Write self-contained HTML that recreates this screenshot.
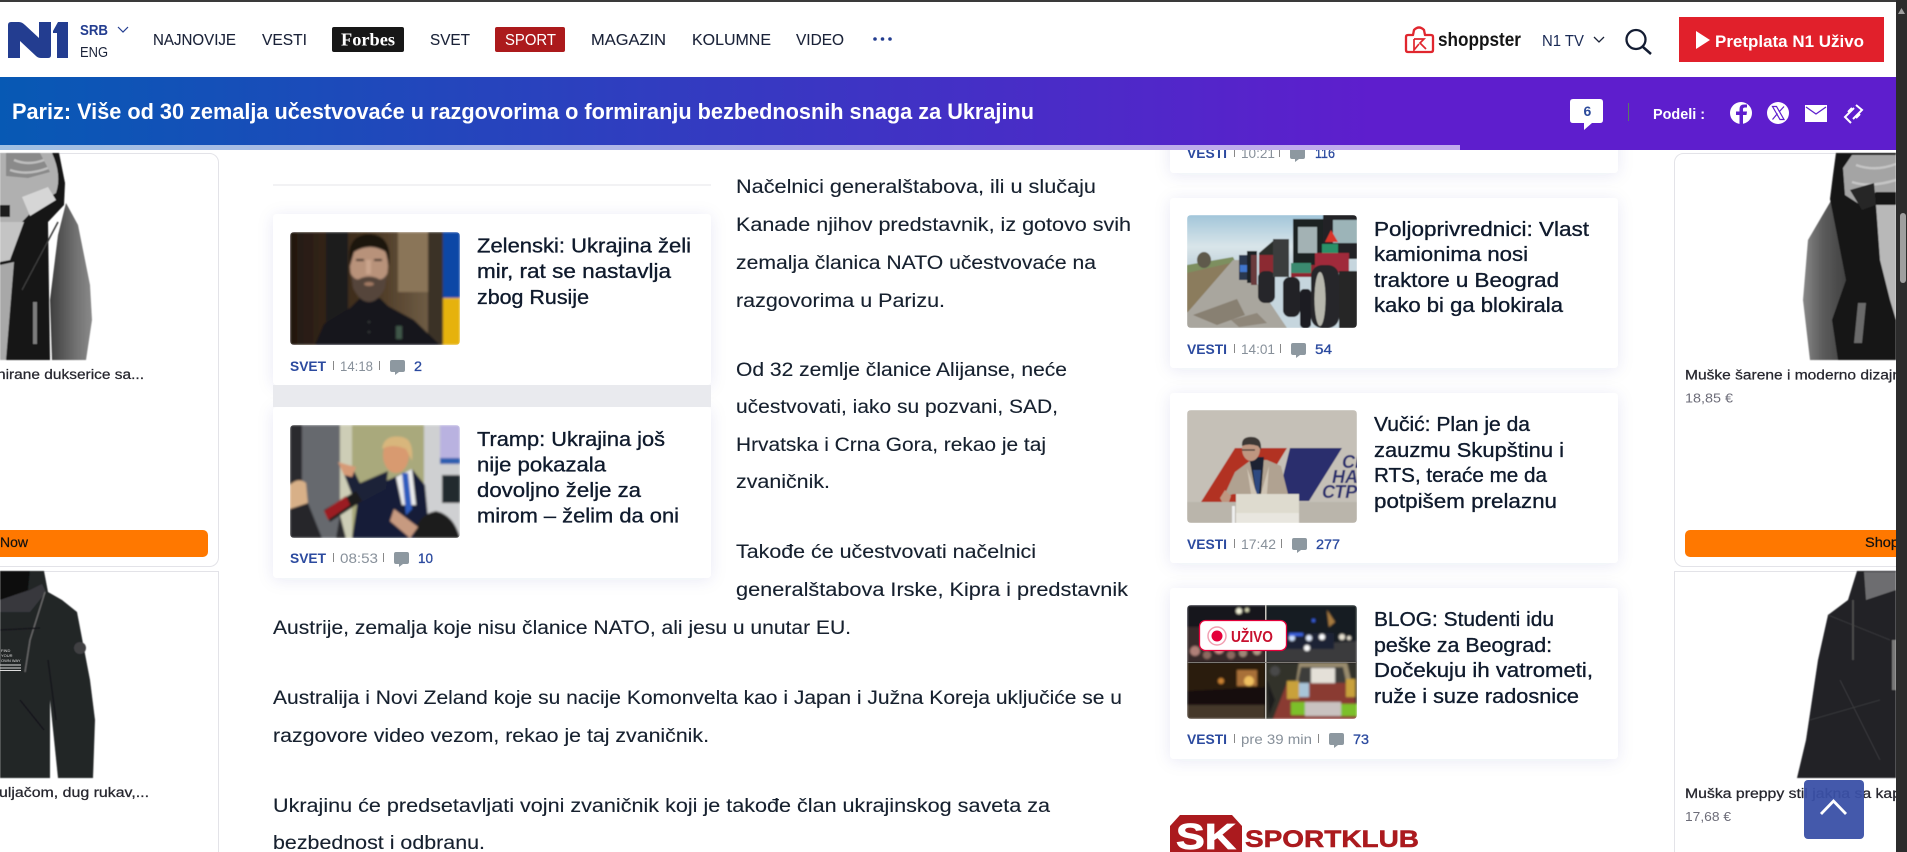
<!DOCTYPE html>
<html lang="sr"><head><meta charset="utf-8"><title>N1</title>
<style>
html,body{margin:0;padding:0;width:1907px;height:852px;overflow:hidden;background:#fff}
svg{display:block;position:absolute;left:0;top:0}
text{font-family:"Liberation Sans",sans-serif;white-space:pre}
.nav{font-size:15.5px;fill:#1a2238;stroke:#1a2238;stroke-width:.1px}
.ttl{font-size:20.5px;fill:#0f1a2c;stroke:#0f1a2c;stroke-width:.35px}
.art{font-size:19px;fill:#16202e;stroke:#16202e;stroke-width:.12px}
.cat{font-size:14px;font-weight:bold;fill:#2b4a9f}
.tm{font-size:14px;fill:#87909a}
.cn{font-size:14px;fill:#2b4a9f;stroke:#2b4a9f;stroke-width:.3px}
.ad{font-size:13.5px;fill:#26262e;stroke:#26262e;stroke-width:.25px}
.pr{font-size:13px;fill:#6c6c78}
</style></head><body>
<svg width="1907" height="852" viewBox="0 0 1907 852" xmlns="http://www.w3.org/2000/svg">
<defs>
<linearGradient id="bar" x1="0" x2="1" y1="0" y2="0"><stop offset="0" stop-color="#0759b4"/><stop offset=".72" stop-color="#5e1ecd"/><stop offset="1" stop-color="#5e1ecd"/></linearGradient>
<clipPath id="ph"><rect width="170" height="113" rx="4"/></clipPath>
<clipPath id="ph2"><rect width="170" height="114" rx="4"/></clipPath>
<filter id="sh" x="-10%" y="-20%" width="120%" height="140%"><feDropShadow dx="0" dy="2" stdDeviation="8" flood-color="#28408c" flood-opacity=".09"/></filter>
<filter id="bl" x="-5%" y="-5%" width="110%" height="110%"><feGaussianBlur stdDeviation="1"/></filter>
<filter id="bl2" x="-5%" y="-5%" width="110%" height="110%"><feGaussianBlur stdDeviation=".6"/></filter>
<linearGradient id="sky" x1="0" x2="0" y1="0" y2="1"><stop offset="0" stop-color="#a2c6da"/><stop offset=".28" stop-color="#d9e5e9"/><stop offset=".42" stop-color="#c6d6de"/></linearGradient>
<linearGradient id="zb" x1="0" x2="1" y1="0" y2="0"><stop offset="0" stop-color="#221710"/><stop offset=".45" stop-color="#46331f"/><stop offset=".8" stop-color="#6d5b44"/><stop offset="1" stop-color="#4d4030"/></linearGradient>
<linearGradient id="slv" x1="0" x2="1" y1="0" y2="0"><stop offset="0" stop-color="#3e3e3e"/><stop offset=".6" stop-color="#707070"/><stop offset="1" stop-color="#8a8a8a"/></linearGradient>
<linearGradient id="slv2" x1="0" x2="1" y1="0" y2="0"><stop offset="0" stop-color="#888"/><stop offset=".4" stop-color="#5c5c5c"/><stop offset="1" stop-color="#3a3a3a"/></linearGradient>
<g id="bub"><path d="M2 0h11a2 2 0 0 1 2 2v8a2 2 0 0 1-2 2H9l-4 3v-3H2a2 2 0 0 1-2-2V2a2 2 0 0 1 2-2z" fill="#8d98a0"/></g>
</defs>

<!-- LEFT ADS -->
<g>
<rect x="-10" y="153.500" width="228.500" height="413" rx="9" fill="#fff" stroke="#e3e3e8"/>
<rect x="-10" y="571.500" width="228.500" height="300" fill="#fff" stroke="#e3e3e8"/>
<g filter="url(#bl2)">
<path d="M66 203L78 225L90 285L92 320L86 360H52L50 300L58 235Z" fill="url(#slv)"/>
<path d="M0 153H59L65 183L64 205L48 222L50 360H0Z" fill="#141414"/>
<path d="M0 153H52Q62 175 56 193L40 203L22 222H0Z" fill="#b0b0b0"/>
<path d="M6 153H40L50 172L28 178L6 176Z" fill="#8a8a8a"/>
<path d="M14 160Q28 166 44 160M10 170Q28 176 48 168" stroke="#bdbdbd" stroke-width="2.500" fill="none"/>
<path d="M22 197L48 187L56 200L30 216Z" fill="#d6d6d6"/>
<path d="M0 205h10v12H0z" fill="#1a1a1a"/>
<path d="M0 222H24L10 260L0 262Z" fill="#c4c4c4"/>
<path d="M0 265L14 262L6 360H0Z" fill="#a8a8a8"/>
<path d="M33 302h4v42h-4z" fill="#7c7c7c"/>
<path d="M58 222L22 290" stroke="#3a3a3a" stroke-width="1.500"/>
</g>
<text class="ad" x="-3" y="379" textLength="147" lengthAdjust="spacingAndGlyphs">nirane dukserice sa...</text>
<rect x="-10" y="530" width="218" height="27" rx="5" fill="#ff7800"/>
<text x="0" y="547" font-size="14" fill="#111" stroke="#111" stroke-width=".2" textLength="28" lengthAdjust="spacingAndGlyphs">Now</text>
<g filter="url(#bl2)">
<path d="M0 571H44L48 592L62 600L77 612L90 680L95 720L93 778H58L50 700L50 778H0Z" fill="#242528"/>
<path d="M0 571H30L28 590L0 600Z" fill="#101010"/>
<path d="M0 600L30 590L42 584L46 592L30 612L0 612Z" fill="#38393c"/>
<path d="M45 592L30 640L25 672" stroke="#666" stroke-width="1.500" fill="none"/>
<path d="M0 630L40 628M48 660L56 720M20 700L44 730" stroke="#18181a" stroke-width="1.500" fill="none"/>
<circle cx="80" cy="648" r="6" fill="#3f3f43"/>
</g>
<text x="1" y="652" font-size="4" fill="#ddd">FIND</text>
<text x="1" y="657" font-size="4" fill="#ddd">YOUR</text>
<text x="1" y="662" font-size="4" fill="#ddd">OWN WAY</text>
<path d="M0 664.500h21v1H0zM0 667.500h21v1H0zM0 670h21v1H0z" fill="#ddd"/>
<text class="ad" x="-1" y="797" textLength="150" lengthAdjust="spacingAndGlyphs">uljačom, dug rukav,...</text>
</g>

<!-- ARTICLE -->
<rect x="273" y="184.500" width="438" height="1" fill="#e5e5e8"/>
<rect x="273" y="214" width="438" height="171" rx="4" fill="#fff" filter="url(#sh)"/>
<rect x="273" y="407" width="438" height="171" rx="4" fill="#fff" filter="url(#sh)"/>
<rect x="273" y="385" width="438" height="22" fill="#e9eaee"/>

<g transform="translate(290 232)" clip-path="url(#ph)"><g filter="url(#bl)">
<rect width="170" height="113" fill="url(#zb)"/>
<rect x="36" width="22" height="113" fill="#1d1b1f"/>
<rect x="108" width="30" height="60" fill="#8a7558"/>
<rect x="138" width="16" height="113" fill="#3a3028"/>
<rect x="153" width="17" height="66" fill="#0d47a6"/>
<rect x="153" y="66" width="17" height="47" fill="#e6b208"/>
<path d="M25 113L34 92L60 76L70 66H90L98 74L124 88L150 113Z" fill="#13171a"/>
<ellipse cx="79" cy="34" rx="19" ry="28" fill="#b8927a"/>
<path d="M60 34Q55 3 79 2Q103 3 99 34L96 20Q80 10 64 20Z" fill="#1a1411"/>
<path d="M61 42Q66 50 71 46Q79 43 87 46Q92 50 97 42L95 56Q88 70 79 70Q70 70 63 56Z" fill="#54443a"/>
<ellipse cx="79" cy="52" rx="5" ry="2" fill="#a27a64"/>
<path d="M66 28h8M84 28h8" stroke="#2a1c14" stroke-width="2"/>
<rect x="76" y="28" width="5" height="14" fill="#c9a48c"/>
<path d="M106 94h6v13h-6z" fill="#40574a"/>
<circle cx="79" cy="90" r="1" fill="#444"/><circle cx="79" cy="100" r="1" fill="#444"/>
</g></g>

<g transform="translate(290 425)" clip-path="url(#ph)"><g filter="url(#bl)">
<rect width="170" height="113" fill="#2a2b2e"/>
<rect x="12" width="38" height="113" fill="#66696e"/>
<rect x="50" width="12" height="113" fill="#cdcdb6"/>
<rect x="62" width="72" height="113" fill="#a9a97c"/>
<rect x="134" width="36" height="113" fill="#cfd0d2"/>
<rect x="150" width="20" height="33" fill="#b9b2e0"/><rect x="150" y="33" width="20" height="6" fill="#2f5fb0"/>
<rect x="152" y="50" width="18" height="28" fill="#23292f"/>
<path d="M62 113L68 74L96 56L122 44L135 60L140 113Z" fill="#191f38"/>
<path d="M52 44L62 42L70 58L98 46L96 64L66 80Z" fill="#1b2138"/>
<path d="M48 37L58 40L66 42L62 52L54 50Z" fill="#d69a76"/>
<path d="M106 52L122 44L126 80L112 80Z" fill="#ececec"/>
<path d="M112 48L118 48L122 84L116 90Z" fill="#2f5bbd"/>
<ellipse cx="106" cy="30" rx="13" ry="18" fill="#d89a70"/>
<path d="M92 24Q94 9 112 12Q124 14 122 36L116 24Q102 18 92 24Z" fill="#d8b67c"/>
<path d="M0 60Q8 52 16 58L18 80L0 84Z" fill="#d8b088"/>
<path d="M0 84L18 78L32 113H0Z" fill="#26262a"/>
<path d="M34 85L66 66L72 76L40 97Z" fill="#1c1c1e"/>
<path d="M34 86L56 71L60 80L38 95Z" fill="#9b1c20"/>
<path d="M124 113Q126 90 146 86Q164 90 170 113Z" fill="#1f1c1b"/>
<path d="M104 84L128 102L120 113L100 96Z" fill="#c79a80"/>
<path d="M50 90L56 113H46Z" fill="#2c2c2e"/>
</g></g>

<text class="ttl" x="477" y="252.500" textLength="214" lengthAdjust="spacingAndGlyphs">Zelenski: Ukrajina želi</text>
<text class="ttl" x="477" y="278" textLength="194" lengthAdjust="spacingAndGlyphs">mir, rat se nastavlja</text>
<text class="ttl" x="477" y="304" textLength="112" lengthAdjust="spacingAndGlyphs">zbog Rusije</text>
<text class="cat" x="290" y="371" textLength="36" lengthAdjust="spacingAndGlyphs">SVET</text>
<rect x="333" y="361" width="1" height="9" fill="#888"/>
<text class="tm" x="340" y="371" textLength="33" lengthAdjust="spacingAndGlyphs">14:18</text>
<rect x="379" y="361" width="1" height="9" fill="#888"/>
<use href="#bub" x="390" y="360"/>
<text class="cn" x="414" y="371" textLength="8" lengthAdjust="spacingAndGlyphs">2</text>

<text class="ttl" x="477" y="446" textLength="188" lengthAdjust="spacingAndGlyphs">Tramp: Ukrajina još</text>
<text class="ttl" x="477" y="471.500" textLength="129" lengthAdjust="spacingAndGlyphs">nije pokazala</text>
<text class="ttl" x="477" y="497" textLength="164" lengthAdjust="spacingAndGlyphs">dovoljno želje za</text>
<text class="ttl" x="477" y="522.500" textLength="202" lengthAdjust="spacingAndGlyphs">mirom – želim da oni</text>
<text class="cat" x="290" y="563" textLength="36" lengthAdjust="spacingAndGlyphs">SVET</text>
<rect x="333" y="553" width="1" height="9" fill="#888"/>
<text class="tm" x="340" y="563" textLength="38" lengthAdjust="spacingAndGlyphs">08:53</text>
<rect x="383" y="553" width="1" height="9" fill="#888"/>
<use href="#bub" x="394" y="552"/>
<text class="cn" x="418" y="563" textLength="15" lengthAdjust="spacingAndGlyphs">10</text>

<text class="art" x="736" y="193" textLength="360" lengthAdjust="spacingAndGlyphs">Načelnici generalštabova, ili u slučaju</text>
<text class="art" x="736" y="231" textLength="395" lengthAdjust="spacingAndGlyphs">Kanade njihov predstavnik, iz gotovo svih</text>
<text class="art" x="736" y="269" textLength="360" lengthAdjust="spacingAndGlyphs">zemalja članica NATO učestvovaće na</text>
<text class="art" x="736" y="307" textLength="209" lengthAdjust="spacingAndGlyphs">razgovorima u Parizu.</text>
<text class="art" x="736" y="376" textLength="331" lengthAdjust="spacingAndGlyphs">Od 32 zemlje članice Alijanse, neće</text>
<text class="art" x="736" y="413" textLength="322" lengthAdjust="spacingAndGlyphs">učestvovati, iako su pozvani, SAD,</text>
<text class="art" x="736" y="451" textLength="310" lengthAdjust="spacingAndGlyphs">Hrvatska i Crna Gora, rekao je taj</text>
<text class="art" x="736" y="488" textLength="94" lengthAdjust="spacingAndGlyphs">zvaničnik.</text>
<text class="art" x="736" y="558" textLength="300" lengthAdjust="spacingAndGlyphs">Takođe će učestvovati načelnici</text>
<text class="art" x="736" y="596" textLength="392" lengthAdjust="spacingAndGlyphs">generalštabova Irske, Kipra i predstavnik</text>
<text class="art" x="273" y="634" textLength="578" lengthAdjust="spacingAndGlyphs">Austrije, zemalja koje nisu članice NATO, ali jesu u unutar EU.</text>
<text class="art" x="273" y="704" textLength="849" lengthAdjust="spacingAndGlyphs">Australija i Novi Zeland koje su nacije Komonvelta kao i Japan i Južna Koreja uključiće se u</text>
<text class="art" x="273" y="742" textLength="436" lengthAdjust="spacingAndGlyphs">razgovore video vezom, rekao je taj zvaničnik.</text>
<text class="art" x="273" y="812" textLength="777" lengthAdjust="spacingAndGlyphs">Ukrajinu će predsetavljati vojni zvaničnik koji je takođe član ukrajinskog saveta za</text>
<text class="art" x="273" y="849" textLength="212" lengthAdjust="spacingAndGlyphs">bezbednost i odbranu.</text>

<!-- RIGHT COLUMN -->
<rect x="1170" y="100" width="448" height="73" rx="4" fill="#fff" filter="url(#sh)"/>
<rect x="1170" y="198" width="448" height="170" rx="4" fill="#fff" filter="url(#sh)"/>
<rect x="1170" y="393" width="448" height="170" rx="4" fill="#fff" filter="url(#sh)"/>
<rect x="1170" y="588" width="448" height="171" rx="4" fill="#fff" filter="url(#sh)"/>

<text class="cat" x="1187" y="158" textLength="40" lengthAdjust="spacingAndGlyphs">VESTI</text>
<rect x="1234" y="148" width="1" height="9" fill="#888"/>
<text class="tm" x="1241" y="158" textLength="34" lengthAdjust="spacingAndGlyphs">10:21</text>
<rect x="1279" y="148" width="1" height="9" fill="#888"/>
<use href="#bub" x="1290" y="147"/>
<text class="cn" x="1315" y="158" textLength="20" lengthAdjust="spacingAndGlyphs">116</text>

<g transform="translate(1187 215)" clip-path="url(#ph)"><g filter="url(#bl2)">
<rect width="170" height="113" fill="url(#sky)"/>
<path d="M0 50L46 42L50 50L0 62Z" fill="#7d8f5e"/>
<path d="M0 58L48 47L0 98Z" fill="#8b7c5d"/>
<ellipse cx="17" cy="45" rx="7" ry="8" fill="#5e5a4c"/>
<path d="M46 45L54 45L100 113H0V98Z" fill="#a9a69e"/>
<path d="M6 100L50 84L58 100L30 110Z" fill="#7e7363" opacity=".75"/>
<path d="M44 105L70 98L80 108L52 112Z" fill="#7e7363" opacity=".6"/>
<!-- distant tractors -->
<path d="M52 40h12v25H52z" fill="#2a3750"/><rect x="53" y="50" width="11" height="7" fill="#3f76cc"/><rect x="60" y="36" width="10" height="32" fill="#1e2226"/>
<rect x="64" y="40" width="6" height="30" fill="#6a3a3c"/>
<!-- red tractor -->
<path d="M72 38L86 26H100V60H72Z" fill="#2a2e2c"/>
<path d="M72 40h26v22H72z" fill="#8c2c30"/>
<rect x="71" y="56" width="17" height="32" rx="7" fill="#26272a"/>
<rect x="86" y="24" width="16" height="38" fill="#3a3e3c"/>
<!-- big tractor -->
<path d="M106 4H136V60H106Z" fill="#1f2022"/>
<path d="M111 12H130V38H111Z" fill="#a3b2b4"/>
<path d="M104 50H136V62H104Z" fill="#8f2832"/>
<rect x="104" y="48" width="20" height="10" fill="#3a8a70"/>
<rect x="96" y="62" width="17" height="40" rx="7" fill="#232426"/>
<path d="M136 0H170V44H136Z" fill="#232426"/>
<path d="M146 5H170V28H146Z" fill="#9cb4b8"/>
<path d="M144 15L151 27H138Z" fill="#d8342c"/>
<rect x="135" y="29" width="16" height="9" fill="#2a9068"/>
<path d="M128 38H162V58H128Z" fill="#a02c3a"/>
<rect x="124" y="50" width="28" height="63" rx="11" fill="#26272a"/>
<ellipse cx="133" cy="84" rx="5.500" ry="27" fill="#b6b6ac"/>
<rect x="152" y="56" width="18" height="57" fill="#252527"/>
<rect x="113" y="74" width="11" height="39" rx="4" fill="#1d1e20"/>
</g></g>
<text class="ttl" x="1374" y="236" textLength="215" lengthAdjust="spacingAndGlyphs">Poljoprivrednici: Vlast</text>
<text class="ttl" x="1374" y="261" textLength="154" lengthAdjust="spacingAndGlyphs">kamionima nosi</text>
<text class="ttl" x="1374" y="287" textLength="185" lengthAdjust="spacingAndGlyphs">traktore u Beograd</text>
<text class="ttl" x="1374" y="312" textLength="189" lengthAdjust="spacingAndGlyphs">kako bi ga blokirala</text>
<text class="cat" x="1187" y="354" textLength="40" lengthAdjust="spacingAndGlyphs">VESTI</text>
<rect x="1234" y="344" width="1" height="9" fill="#888"/>
<text class="tm" x="1241" y="354" textLength="34" lengthAdjust="spacingAndGlyphs">14:01</text>
<rect x="1280" y="344" width="1" height="9" fill="#888"/>
<use href="#bub" x="1291" y="343"/>
<text class="cn" x="1315" y="354" textLength="17" lengthAdjust="spacingAndGlyphs">54</text>

<g transform="translate(1187 410)" clip-path="url(#ph)"><g filter="url(#bl2)">
<rect width="170" height="113" fill="#c5c0b7"/>
<rect y="92" width="170" height="21" fill="#bab5ab"/>
<path d="M48 38H100L67 92H14Z" fill="#b23223"/>
<path d="M103 38H155L122 91H90Z" fill="#2a2f6d"/>
<text x="155" y="58" font-size="18" font-weight="bold" font-style="italic" fill="#2a2f6d">СН</text>
<text x="145" y="73" font-size="18" font-weight="bold" font-style="italic" fill="#2a2f6d">НА</text>
<text x="135" y="88" font-size="18" font-weight="bold" font-style="italic" fill="#2a2f6d">СТР</text>
<path d="M36 88L48 62L64 50H80L94 56L101 84H46Z" fill="#b0a291"/>
<path d="M62 47H77L74 84H69Z" fill="#1c2433"/><path d="M66 60H74L72 84H69Z" fill="#2d4a80"/>
<path d="M60 58L70 84H64Z M82 56L74 84H80Z" fill="#cfc4b4"/>
<ellipse cx="64" cy="39" rx="9" ry="12" fill="#bf9680"/>
<path d="M55 36Q54 26 66 27Q75 28 74 40L71 36Q62 33 55 36Z" fill="#3c3834"/>
<path d="M55 40h13" stroke="#222" stroke-width="1.200"/>
<path d="M33 88l5-8 6 6-2 6h-7z" fill="#bf9680"/>
<path d="M49 84H112V103H49Z" fill="#dedbcf"/>
<path d="M49 103H112V113H49Z" fill="#e8e6df"/>
<rect x="45" y="96" width="3" height="17" fill="#eee"/>
</g></g>
<text class="ttl" x="1374" y="431" textLength="156" lengthAdjust="spacingAndGlyphs">Vučić: Plan je da</text>
<text class="ttl" x="1374" y="457" textLength="190" lengthAdjust="spacingAndGlyphs">zauzmu Skupštinu i</text>
<text class="ttl" x="1374" y="482" textLength="173" lengthAdjust="spacingAndGlyphs">RTS, teraće me da</text>
<text class="ttl" x="1374" y="508" textLength="183" lengthAdjust="spacingAndGlyphs">potpišem prelaznu</text>
<text class="cat" x="1187" y="549" textLength="40" lengthAdjust="spacingAndGlyphs">VESTI</text>
<rect x="1234" y="539" width="1" height="9" fill="#888"/>
<text class="tm" x="1241" y="549" textLength="35" lengthAdjust="spacingAndGlyphs">17:42</text>
<rect x="1281" y="539" width="1" height="9" fill="#888"/>
<use href="#bub" x="1292" y="538"/>
<text class="cn" x="1316" y="549" textLength="24" lengthAdjust="spacingAndGlyphs">277</text>

<g transform="translate(1187 605)" clip-path="url(#ph2)"><g filter="url(#bl)">
<rect width="170" height="114" fill="#14110f"/>
<rect width="78" height="57" fill="#16131a"/>
<path d="M0 22h78v35H0z" fill="#37292b"/>
<circle cx="8" cy="46" r="5" fill="#b08078"/><circle cx="20" cy="50" r="4" fill="#8c6a60"/><circle cx="32" cy="44" r="5" fill="#c89088"/><circle cx="44" cy="50" r="4" fill="#8c6a60"/><circle cx="56" cy="48" r="4" fill="#a08878"/><circle cx="70" cy="46" r="4" fill="#b09c88"/>
<circle cx="52" cy="6" r="3" fill="#f2f2d8"/><circle cx="60" cy="5" r="2" fill="#d8d8b4"/>
<rect x="79" width="91" height="57" fill="#181a22"/>
<path d="M80 42L170 36V57H80Z" fill="#3a3a3c"/>
<path d="M82 28h65v16H82z" fill="#1a2436"/>
<circle cx="105" cy="33" r="3" fill="#cfe2ff"/><circle cx="122" cy="33" r="3" fill="#e8f0ff"/><circle cx="135" cy="32" r="3" fill="#fff"/><circle cx="155" cy="32" r="3" fill="#e8e2d2"/><circle cx="162" cy="33" r="2" fill="#e8e2d2"/><circle cx="120" cy="43" r="3" fill="#fff"/>
<rect x="102" y="28" width="14" height="3" fill="#3a62e0"/>
<path d="M140 5l8 12-6 5z" fill="#a87c40"/><rect x="125" y="14" width="3" height="3" fill="#3a62e0"/>
<rect y="58" width="78" height="56" fill="#2a1b10"/>
<path d="M0 86L78 82V100H0Z" fill="#14100e"/>
<rect y="100" width="78" height="14" fill="#45382a"/>
<path d="M50 65h20v16H50z" fill="#a87038"/><circle cx="62" cy="76" r="5" fill="#f0c060"/><circle cx="34" cy="76" r="3" fill="#c88030"/>
<rect x="79" y="58" width="91" height="56" fill="#33302c"/>
<path d="M112 58H160L166 84H108Z" fill="#9a8c6e"/>
<path d="M114 62H156L160 80H110Z" fill="#3c3c3a"/>
<rect x="124" y="63" width="24" height="15" fill="#e4e0d8"/>
<path d="M86 114L100 78H166L170 114Z" fill="#8a3a30"/>
<rect x="100" y="76" width="12" height="18" fill="#c9a13a"/>
<rect x="159" y="74" width="9" height="18" fill="#c9a13a"/>
<rect x="104" y="97" width="14" height="13" fill="#7cc02c"/>
<rect x="154" y="99" width="16" height="12" fill="#7cc02c"/>
<rect x="118" y="97" width="36" height="14" fill="#c9c2c0"/>
<rect x="112" y="78" width="10" height="14" fill="#a8c4d8"/>
<path d="M80 75l8 20-6 15z" fill="#1b1b1d"/>
<circle cx="88" cy="66" r="5" fill="#4a4a48"/>
</g>
<rect x="78" width="1.500" height="114" fill="#c9c6c0"/>
<rect y="57" width="170" height="1" fill="#7c7874"/>
</g>
<rect x="1199.500" y="620.500" width="87" height="30" rx="6" fill="#fff" stroke="#e4003a" stroke-width="1.300"/>
<circle cx="1217" cy="636" r="9" fill="#fff" stroke="#f1a0b2" stroke-width="1.500"/>
<circle cx="1217" cy="636" r="5.500" fill="#e4003a"/>
<text x="1231" y="642" font-size="16" font-weight="bold" fill="#c8102e" textLength="42" lengthAdjust="spacingAndGlyphs">UŽIVO</text>
<text class="ttl" x="1374" y="626" textLength="180" lengthAdjust="spacingAndGlyphs">BLOG: Studenti idu</text>
<text class="ttl" x="1374" y="652" textLength="178" lengthAdjust="spacingAndGlyphs">peške za Beograd:</text>
<text class="ttl" x="1374" y="677" textLength="219" lengthAdjust="spacingAndGlyphs">Dočekuju ih vatrometi,</text>
<text class="ttl" x="1374" y="703" textLength="205" lengthAdjust="spacingAndGlyphs">ruže i suze radosnice</text>
<text class="cat" x="1187" y="744" textLength="40" lengthAdjust="spacingAndGlyphs">VESTI</text>
<rect x="1234" y="734" width="1" height="9" fill="#888"/>
<text class="tm" x="1241" y="744" textLength="71" lengthAdjust="spacingAndGlyphs">pre 39 min</text>
<rect x="1318" y="734" width="1" height="9" fill="#888"/>
<use href="#bub" x="1329" y="733"/>
<text class="cn" x="1353" y="744" textLength="16" lengthAdjust="spacingAndGlyphs">73</text>

<!-- SPORTKLUB -->
<path d="M1170 826L1180 815H1232L1242 826V860H1170Z" fill="#ab1a1e"/>
<text x="1176" y="849" font-size="36" font-weight="bold" fill="#fff" stroke="#fff" stroke-width=".8" textLength="60" lengthAdjust="spacingAndGlyphs">SK</text>
<text x="1245" y="847" font-size="24" font-weight="bold" fill="#ab1a1e" stroke="#ab1a1e" stroke-width=".5" textLength="174" lengthAdjust="spacingAndGlyphs">SPORTKLUB</text>

<!-- RIGHT ADS -->
<rect x="1674.500" y="153.500" width="260" height="413" rx="9" fill="#fff" stroke="#e3e3e8"/>
<rect x="1674.500" y="571.500" width="260" height="300" fill="#fff" stroke="#e3e3e8"/>
<g filter="url(#bl2)">
<path d="M1832 199L1848 215L1852 280L1835 330L1842 360H1810L1803 300L1808 240Z" fill="url(#slv2)"/>
<path d="M1836 153H1896V360H1838L1832 320L1846 280L1830 199L1833 175Z" fill="#141414"/>
<path d="M1843 168L1852 155H1896V192H1876L1862 206L1845 195Z" fill="#a4a4a4"/>
<path d="M1856 165Q1875 172 1896 164M1852 182Q1870 188 1896 180" stroke="#c4c4c4" stroke-width="2.500" fill="none"/>
<path d="M1876 205H1896V320L1890 300L1880 260Z" fill="#b8b8b8"/>
<path d="M1858 303h8l-4 40h-8z" fill="#6a6a6a"/>
<path d="M1850 190L1874 183L1876 205L1862 210Z" fill="#262626"/>
</g>
<text class="ad" x="1685" y="379.500" textLength="216" lengthAdjust="spacingAndGlyphs">Muške šarene i moderno dizajn</text>
<text class="pr" x="1685" y="402.500" textLength="48" lengthAdjust="spacingAndGlyphs">18,85 €</text>
<rect x="1685" y="530" width="240" height="27" rx="5" fill="#ff7800"/>
<text x="1865" y="547" font-size="14" fill="#111" stroke="#111" stroke-width=".25" textLength="34" lengthAdjust="spacingAndGlyphs">Shop</text>
<g filter="url(#bl2)">
<path d="M1857 571H1896V778H1797L1806 740L1818 660L1828 615L1848 600Z" fill="#222326"/>
<path d="M1864 572H1896V590L1866 600Z" fill="#6d6d6f"/>
<path d="M1828 615L1890 640M1810 720L1880 700M1840 680L1880 760" stroke="#38383a" fill="none"/>
<path d="M1853 600V660" stroke="#4a4a4a" stroke-width="2"/>
<rect x="1892" y="640" width="4" height="50" fill="#777"/>
</g>
<text class="ad" x="1685" y="798" textLength="216" lengthAdjust="spacingAndGlyphs">Muška preppy stil jakna sa kap</text>
<text class="pr" x="1685" y="821" textLength="46" lengthAdjust="spacingAndGlyphs">17,68 €</text>

<!-- BACK TO TOP -->
<rect x="1804" y="780" width="60" height="59" rx="4" fill="#3a50a6" fill-opacity=".95"/>
<path d="M1821 814L1833.500 801L1846 814" fill="none" stroke="#fff" stroke-width="2.800"/>

<!-- HEADER -->
<rect x="0" y="0" width="1907" height="77" fill="#fff"/>
<rect x="0" y="0" width="1907" height="2" fill="#3a3a3a"/>
<path d="M8 58V25Q8 22 11 22H19Q22 22 25 25L39 38V22H51V55Q51 58 48 58H41Q38 58 36 56L20 41V58Z" fill="#233d90"/>
<path d="M53 31L58 22H68V58H57V33H53Z" fill="#233d90"/>
<text x="80" y="35" font-size="15" font-weight="bold" fill="#233d90" textLength="28" lengthAdjust="spacingAndGlyphs">SRB</text>
<path d="M118 27l5 5 5-5" fill="none" stroke="#233d90" stroke-width="1.200"/>
<text x="80" y="57" font-size="15" fill="#1a2238" textLength="28" lengthAdjust="spacingAndGlyphs">ENG</text>
<text class="nav" x="153" y="45" textLength="83" lengthAdjust="spacingAndGlyphs">NAJNOVIJE</text>
<text class="nav" x="262" y="45" textLength="45" lengthAdjust="spacingAndGlyphs">VESTI</text>
<rect x="332" y="27" width="72" height="25" rx="2" fill="#171717"/>
<text x="341" y="45.500" font-size="18" font-weight="bold" fill="#fff" style="font-family:'Liberation Serif',serif" textLength="54" lengthAdjust="spacingAndGlyphs">Forbes</text>
<text class="nav" x="430" y="45" textLength="40" lengthAdjust="spacingAndGlyphs">SVET</text>
<rect x="495" y="27" width="70" height="25" rx="2" fill="#ac1a1c"/>
<text x="505" y="45" font-size="15.500" fill="#fff" textLength="51" lengthAdjust="spacingAndGlyphs">SPORT</text>
<text class="nav" x="591" y="45" textLength="75" lengthAdjust="spacingAndGlyphs">MAGAZIN</text>
<text class="nav" x="692" y="45" textLength="79" lengthAdjust="spacingAndGlyphs">KOLUMNE</text>
<text class="nav" x="796" y="45" textLength="48" lengthAdjust="spacingAndGlyphs">VIDEO</text>
<circle cx="875" cy="39" r="1.800" fill="#233d90"/><circle cx="882.500" cy="39" r="1.800" fill="#233d90"/><circle cx="890" cy="39" r="1.800" fill="#233d90"/>

<path d="M1406 37Q1406 35 1408 35H1413L1414 30Q1419 25 1424 30L1425 35H1431Q1433 35 1433 37V50Q1433 52 1431 52H1408Q1406 52 1406 50Z" fill="none" stroke="#e0262e" stroke-width="2.300" stroke-linejoin="round"/>
<path d="M1414 39H1424L1420 43L1426 49M1414 39V50L1419 44" fill="none" stroke="#e0262e" stroke-width="1.700"/>
<text x="1438" y="46" font-size="19" font-weight="bold" fill="#141414" textLength="83" lengthAdjust="spacingAndGlyphs">shoppster</text>
<text x="1542" y="46" font-size="16" fill="#1a2a55" textLength="42" lengthAdjust="spacingAndGlyphs">N1 TV</text>
<path d="M1594 37l5 5 5-5" fill="none" stroke="#1a2238" stroke-width="1.300"/>
<circle cx="1636" cy="39.500" r="9.500" fill="none" stroke="#141d33" stroke-width="2.300"/>
<path d="M1643 47L1651 54" stroke="#141d33" stroke-width="2.500"/>
<rect x="1679" y="17" width="205" height="45" fill="#e1202b"/>
<path d="M1696 31L1710 40L1696 49Z" fill="#fff"/>
<text x="1715" y="47" font-size="16.500" font-weight="bold" fill="#fff" textLength="149" lengthAdjust="spacingAndGlyphs">Pretplata N1 Uživo</text>

<!-- BAR -->
<rect x="0" y="77" width="1907" height="73" fill="url(#bar)"/>
<rect x="0" y="145" width="1460" height="5" fill="#fff" fill-opacity=".62"/>
<text x="12" y="119" font-size="22" font-weight="bold" fill="#fff" textLength="1022" lengthAdjust="spacingAndGlyphs">Pariz: Više od 30 zemalja učestvovaće u razgovorima o formiranju bezbednosnih snaga za Ukrajinu</text>
<path d="M1573 99H1600Q1603 99 1603 102V120Q1603 123 1600 123H1592L1584 130V123H1573Q1570 123 1570 120V102Q1570 99 1573 99Z" fill="#fff"/>
<text x="1583.500" y="116" font-size="14" font-weight="bold" fill="#2b4a9b">6</text>
<rect x="1628" y="103" width="1" height="18" fill="#5a7a62"/>
<text x="1653" y="119" font-size="15" font-weight="bold" fill="#fff" textLength="52" lengthAdjust="spacingAndGlyphs">Podeli :</text>
<circle cx="1741" cy="113" r="11" fill="#fff"/>
<path d="M1743 124V115H1746.500L1747 111.500H1743V109Q1743 107.500 1745 107.500H1747V104.500H1744Q1739.500 104.500 1739.500 109V111.500H1736V115H1739.500V124Z" fill="#5e1ecd"/>
<circle cx="1778" cy="113" r="11" fill="#fff"/>
<path d="M1772.500 106.500H1776.500L1784 119.500H1780ZM1772.500 119.500L1777.500 113.500M1784 106.500L1779 112" fill="none" stroke="#5e1ecd" stroke-width="1.200"/>
<rect x="1805" y="105" width="22" height="17" fill="#fff"/>
<path d="M1806 107L1816 114L1826 107" fill="none" stroke="#5e1ecd" stroke-width="1.300"/>
<path d="M1856 105L1862 110L1853 119M1851 123L1845 117L1854 108M1848 112L1852 108M1856 118L1860 114" fill="none" stroke="#fff" stroke-width="2"/>

<!-- SCROLLBAR -->
<rect x="1896" y="0" width="11" height="852" fill="#2c2c2c"/>
<path d="M1898 14L1901.500 8L1905 14Z" fill="#9f9f9f"/>
<rect x="1900" y="213" width="6" height="70" rx="3" fill="#9f9f9f"/>
</svg>
</body></html>
